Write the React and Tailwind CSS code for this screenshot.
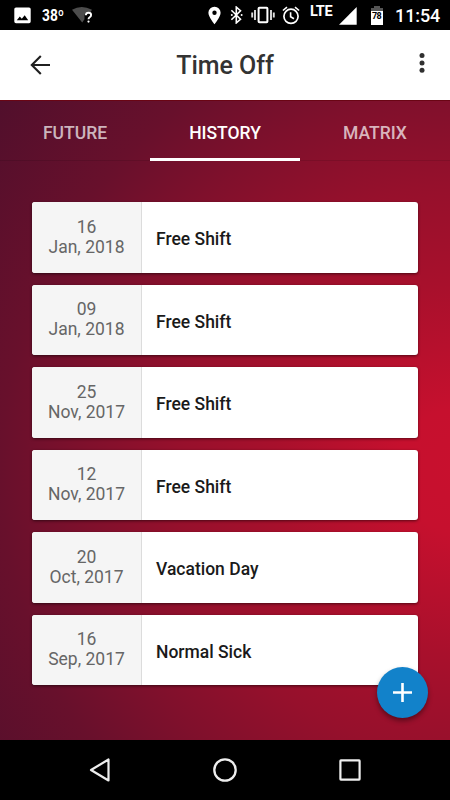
import React from "react";

const entries = [
  { day: "16", month: "Jan, 2018", label: "Free Shift" },
  { day: "09", month: "Jan, 2018", label: "Free Shift" },
  { day: "25", month: "Nov, 2017", label: "Free Shift" },
  { day: "12", month: "Nov, 2017", label: "Free Shift" },
  { day: "20", month: "Oct, 2017", label: "Vacation Day" },
  { day: "16", month: "Sep, 2017", label: "Normal Sick" },
];

function StatusBar() {
  return (
    <div className="flex h-[30px] items-center bg-black text-white">
      <svg className="ml-[14px] h-[17px] w-[17px] shrink-0" viewBox="0 0 17 17">
        <path fillRule="evenodd" fill="#fff" d="M2 0.5H15Q16.7 0.5 16.7 2V14.5Q16.7 16.3 15 16.3H2Q0.3 16.3 0.3 14.5V2Q0.3 0.5 2 0.5ZM2.8 13.2H14.2L10.7 8.2L7.8 11.8L5.8 9.4Z" />
      </svg>
      <span className="ml-[11px] w-[22px] origin-left scale-x-[0.86] pt-[2px] text-[16px] leading-[18px] font-bold whitespace-nowrap">38º</span>
      <svg className="ml-[8px] h-[18px] w-[22px] shrink-0" viewBox="0 0 22 18">
        <path fill="#4c4c4c" d="M0 3.8Q9.5-2 20 3.8L18 6.8Q14 4.5 12.5 9L12.5 13.2L10.2 16.5Z" />
        <path fill="none" stroke="#fff" strokeWidth="1.9" d="M13.9 9.2Q13.9 6.8 16.5 6.8T19.1 9Q19.1 10.3 17.7 11.2Q16.5 12 16.5 13.3" />
        <circle cx="16.5" cy="15.6" r="1.1" fill="#fff" />
      </svg>
      <svg className="ml-[114px] h-[19px] w-[13px] shrink-0" viewBox="0 0 13 19">
        <path fillRule="evenodd" fill="#fff" d="M6.5 0.7A6 6 0 0 1 12.6 6.8C12.6 11 6.5 18.3 6.5 18.3S.4 11 .4 6.8A6 6 0 0 1 6.5.7ZM6.5 4.6A2.2 2.2 0 1 0 6.5 9A2.2 2.2 0 1 0 6.5 4.6Z" />
      </svg>
      <svg className="ml-[9px] h-[18px] w-[14px] shrink-0" viewBox="0 0 14 18">
        <path fill="none" stroke="#fff" strokeWidth="1.6" d="M1.4 4.3L10.5 13.3L6.3 16.9V1.1L10.5 4.7L1.4 13.7" />
        <circle cx="1.8" cy="9" r="1" fill="#fff" />
        <circle cx="11.6" cy="9" r="1" fill="#fff" />
      </svg>
      <svg className="ml-[7px] h-[18px] w-[24px] shrink-0" viewBox="0 0 24 18">
        <rect x="7.6" y="1.7" width="8.8" height="14.6" rx=".8" fill="none" stroke="#fff" strokeWidth="2" />
        <path stroke="#ddd" strokeWidth="1.9" d="M1.2 6.5V11.5M4 4V14M20 4V14M22.8 6.5V11.5" />
      </svg>
      <svg className="ml-[7px] h-[19px] w-[18px] shrink-0" viewBox="0 0 18 19">
        <circle cx="9" cy="10.3" r="7.1" fill="none" stroke="#fff" strokeWidth="1.7" />
        <path fill="none" stroke="#fff" strokeWidth="1.6" d="M.9 4.5L5 1.1M13 1.1L17.1 4.5M8.6 6.2V10.7L12 12.7" />
      </svg>
      <span className="ml-[10px] mb-[7px] w-[23px] text-[14.5px] leading-[14px] font-bold tracking-[-0.4px]">LTE</span>
      <svg className="ml-[6px] mt-[1px] h-[18px] w-[18px] shrink-0" viewBox="0 0 18 18">
        <path fill="#fff" d="M17.7 0V17.7H0Z" />
      </svg>
      <div className="ml-[13px] mt-[1px] flex h-[19px] w-[13px] shrink-0 flex-col items-center">
        <div className="h-[2px] w-[6px] bg-[#555]" />
        <div className="h-[3px] w-[12px] bg-[#555]" />
        <div className="flex h-[14px] w-[12px] justify-center bg-white text-[9px] leading-[10px] font-bold tracking-[-0.6px] text-black">78</div>
      </div>
      <span className="ml-[12px] pt-[2px] text-[18px] leading-[20px] font-medium tracking-[-0.1px]">11:54</span>
    </div>
  );
}

function Header() {
  return (
    <header className="flex h-[70px] items-center bg-white">
      <svg className="ml-[30px] h-[20px] w-[20px] shrink-0" viewBox="0 0 20 20">
        <path fill="none" stroke="#202020" strokeWidth="2.1" d="M20 10H1.8M10.8 1L1.8 10L10.8 19" />
      </svg>
      <h1 className="flex-1 pr-[19px] pt-px text-center text-[25px] leading-[30px] font-medium tracking-[-0.05px] text-[#333]">Time Off</h1>
      <svg className="mb-[4px] mr-[25px] h-[20px] w-[6px] shrink-0" viewBox="0 0 6 20" fill="#303030">
        <circle cx="3" cy="2.5" r="2.5" />
        <circle cx="3" cy="10" r="2.5" />
        <circle cx="3" cy="17.3" r="2.5" />
      </svg>
    </header>
  );
}

function Tabs() {
  return (
    <nav className="grid h-[61px] grid-cols-3 border-t border-[#6a0514] text-center text-[17.5px] leading-[65px] font-medium">
      <div className="h-[60px] border-b border-black/10 text-white/70">FUTURE</div>
      <div className="h-[60px] border-b-[3px] border-white text-white">HISTORY</div>
      <div className="h-[60px] border-b border-black/10 text-white/70">MATRIX</div>
    </nav>
  );
}

export default function App() {
  return (
    <div className="flex h-[800px] w-[450px] flex-col overflow-hidden font-[Roboto,sans-serif]">
      <StatusBar />
      <Header />
      <main className="relative flex h-[640px] flex-col bg-[radial-gradient(ellipse_620px_620px_at_460px_370px,#c8102e_0%,#c6102e_10%,#a8102c_30%,#96102c_46%,#80102c_60%,#68102c_74%,#500f2c_96%)]">
        <Tabs />
        <ul className="mx-8 mt-[41.4px] flex flex-col gap-[12.5px]">
          {entries.map((e, i) => (
            <li key={i} className="flex h-[70.4px] -mb-[0.4px] overflow-hidden rounded-[3px] bg-white shadow-[0_1px_3px_rgba(0,0,0,0.55)]">
              <div className="w-[110px] border-r border-[#dcdcdc] bg-[#f5f5f5] pt-[14.5px] text-center text-[17.5px] leading-[20px] font-[450] text-[#666]">
                <div>{e.day}</div>
                <div>{e.month}</div>
              </div>
              <div className="flex items-center pl-[14px] pt-[4px] text-[17.5px] font-medium text-[#1a1a1a]">{e.label}</div>
            </li>
          ))}
        </ul>
        <button className="absolute right-[22px] bottom-[22px] flex h-[51px] w-[51px] items-center justify-center rounded-full bg-[#1282ca] shadow-[0_3px_5px_rgba(0,0,0,0.4)]">
          <svg className="h-[19px] w-[19px]" viewBox="0 0 19 19">
            <path d="M9.5 0V19M0 9.5H19" stroke="#fff" strokeWidth="2.6" />
          </svg>
        </button>
      </main>
      <footer className="flex h-[60px] items-center justify-between bg-black px-[87px]">
        <svg className="h-[26px] w-[26px]" viewBox="0 0 26 26">
          <path d="M21.5 2.5V23.5L4 13Z" fill="none" stroke="#eee" strokeWidth="2.2" strokeLinejoin="round" />
        </svg>
        <svg className="h-[26px] w-[26px]" viewBox="0 0 26 26">
          <circle cx="13" cy="13" r="10.7" fill="none" stroke="#eee" strokeWidth="2.3" />
        </svg>
        <svg className="h-[26px] w-[26px]" viewBox="0 0 26 26">
          <rect x="3.4" y="3.4" width="19.2" height="19.2" rx=".5" fill="none" stroke="#eee" strokeWidth="2.2" />
        </svg>
      </footer>
    </div>
  );
}
